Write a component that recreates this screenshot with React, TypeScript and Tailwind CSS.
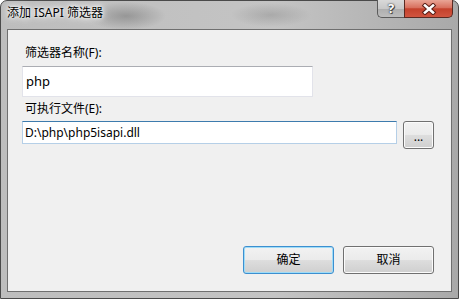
const uiFont = { fontFamily: '"Noto Sans", "Noto Sans CJK SC", sans-serif' };

function WinButton({ label, focused, className }: { label: string; focused?: boolean; className: string }) {
  return (
    <button
      className={
        "flex items-center justify-center rounded-[3px] border text-[12px] text-black bg-[linear-gradient(to_bottom,#f2f2f2_0%,#ebebeb_48%,#dddddd_52%,#cfcfcf_100%)] " +
        (focused
          ? "border-[#3c8fd0] shadow-[inset_0_0_0_1px_#9fdcf7] "
          : "border-[#707070] shadow-[inset_0_0_0_1px_#fbfbfb] ") +
        className
      }
    >
      {label}
    </button>
  );
}

function CloseGlyph() {
  return (
    <svg width="16" height="12" viewBox="0 0 16 12">
      <path d="M4 2.5 L12 9.5 M12 2.5 L4 9.5" stroke="#5a1f17" strokeWidth="4.6" strokeLinecap="square" />
      <path d="M4 2.5 L12 9.5 M12 2.5 L4 9.5" stroke="#ffffff" strokeWidth="2.6" strokeLinecap="square" />
    </svg>
  );
}

export default function App() {
  return (
    <div className="w-[459px] h-[299px] overflow-hidden bg-white" style={uiFont}>
      <div className="w-full h-full flex flex-col rounded-t-[7px] border border-[#4a4a4a] bg-[radial-gradient(ellipse_40px_14px_at_125px_15px,rgba(100,100,100,0.45),transparent),radial-gradient(ellipse_40px_12px_at_270px_14px,rgba(110,110,110,0.3),transparent),linear-gradient(to_right,#bdbdbd,#c4c4c4_60%,#a9a9a9)]">
        {/* Title bar */}
        <div className="h-[28px] flex items-start shrink-0">
          <div className="pl-[6px] pt-[4px] text-[12px] leading-[16px] text-black [text-shadow:0_0_6px_#fff,0_0_10px_#fff,0_0_3px_#fff]">
            添加 ISAPI 筛选器
          </div>
          <div className="ml-auto mr-[5px] -mt-px flex h-[18px]">
            <div className="w-[27px] flex items-center justify-center rounded-bl-[5px] border border-t-0 border-r-0 border-[#5b5b5b] bg-[linear-gradient(to_bottom,#d9d9d9_0%,#c8c8c8_50%,#aeaeae_52%,#bdbdbd_100%)] text-[13px] font-bold leading-none text-white [text-shadow:0_0_1px_#333,0_0_2px_#333,1px_1px_0_#555]">
              ?
            </div>
            <div className="w-[49px] flex items-center justify-center rounded-br-[5px] border border-t-0 border-[#5a2a22] bg-[linear-gradient(to_bottom,#e9a596_0%,#d8705e_45%,#c4412c_52%,#d1553f_100%)]">
              <CloseGlyph />
            </div>
          </div>
        </div>

        {/* Client area */}
        <div className="flex-1 mx-[6px] mb-[6px] flex flex-col border border-[#6f6f6f] bg-[#f0f0f0] px-[14px] pt-[15px] pb-[17px]">
          <div className="ml-[3px] text-[12px] leading-[16px] text-black">筛选器名称(F):</div>
          <div className="mt-[5px] w-[291px] h-[31px] flex items-center pl-[3px] bg-white border border-[#e2e3ea] border-t-[#abadb3] text-[13px] text-black">
            php
          </div>

          <div className="mt-[4px] ml-[3px] text-[12px] leading-[16px] text-black">可执行文件(E):</div>
          <div className="mt-[4px] flex items-start gap-[6px]">
            <div className="w-[375px] h-[23px] flex items-center pl-[2px] bg-white border border-[#b5cfe7] border-t-[#3d7bad] text-[12px] text-black">
              D:\php\php5isapi.dll
            </div>
            <WinButton label="..." className="w-[31px] h-[28px] pt-[4px] text-[#333]" />
          </div>

          <div className="mt-auto flex justify-end gap-[9px] pr-[3px]">
            <WinButton label="确定" focused className="w-[91px] h-[28px]" />
            <WinButton label="取消" className="w-[91px] h-[28px]" />
          </div>
        </div>
      </div>
    </div>
  );
}
